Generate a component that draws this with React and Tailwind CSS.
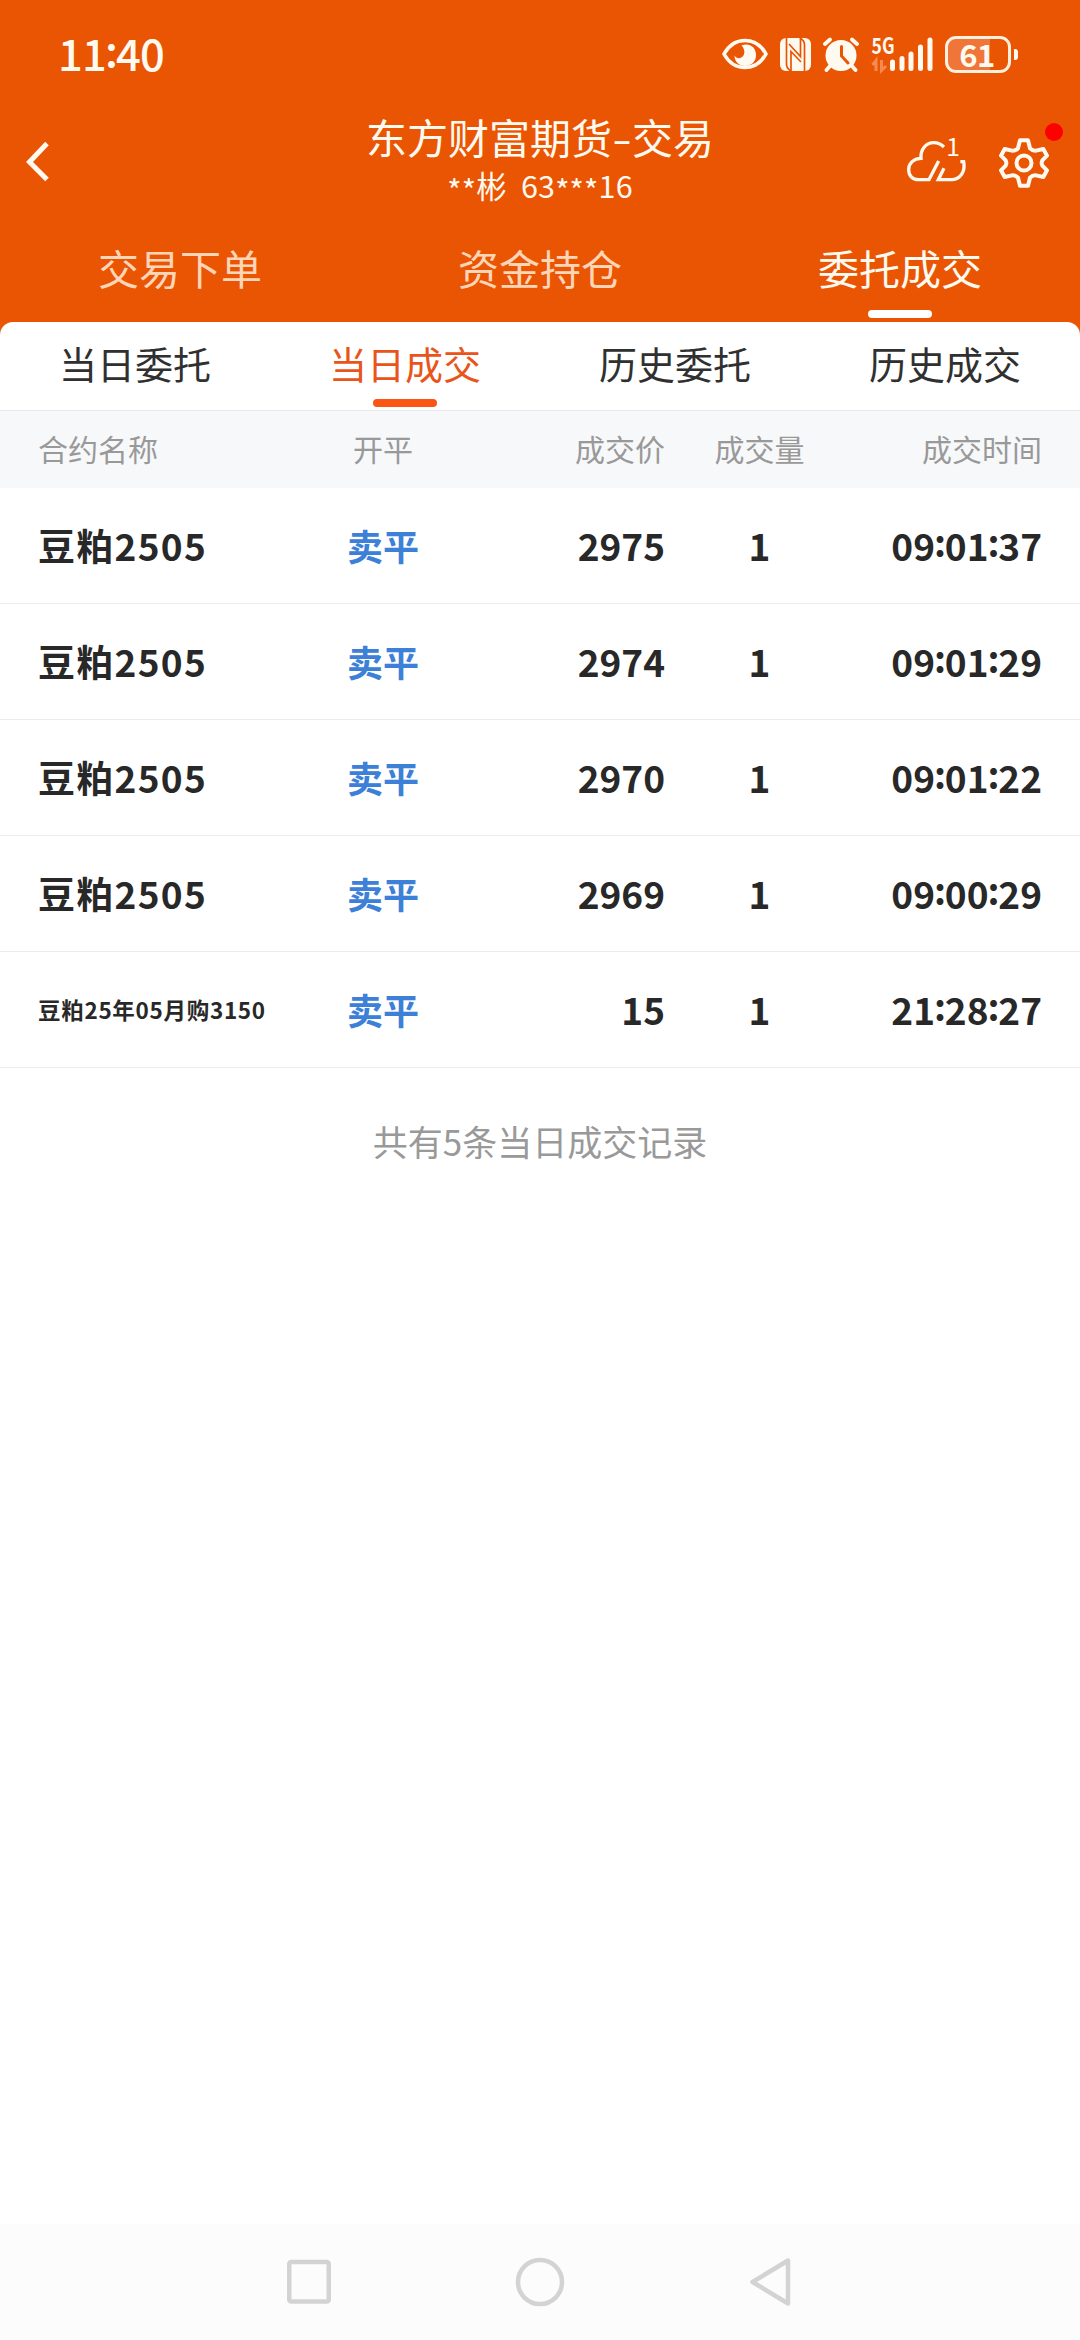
const MAIN_TABS = ['交易下单', '资金持仓', '委托成交'];
const SUB_TABS = ['当日委托', '当日成交', '历史委托', '历史成交'];

const TRADES = [
  { name: '豆粕2505', side: '卖平', price: '2975', qty: '1', time: '09:01:37' },
  { name: '豆粕2505', side: '卖平', price: '2974', qty: '1', time: '09:01:29' },
  { name: '豆粕2505', side: '卖平', price: '2970', qty: '1', time: '09:01:22' },
  { name: '豆粕2505', side: '卖平', price: '2969', qty: '1', time: '09:00:29' },
  { name: '豆粕25年05月购3150', side: '卖平', price: '15', qty: '1', time: '21:28:27', small: true },
];

const GRID = 'grid grid-cols-[260px_170px_197px_189px_188px] items-center px-[38px]';

// digits with a narrow colon that sits at mid height
function Clock({ value }) {
  return value.split(/(:)/).map((part, i) =>
    part === ':'
      ? <span key={i} className="relative -top-[0.09em] -mx-[0.03em]">:</span>
      : <span key={i}>{part}</span>
  );
}

function EyeIcon() {
  return (
    <svg width="46" height="32" viewBox="0 0 46 32" fill="none">
      <path d="M2 16C7 7 14 2.500 23 2.500s16 4.500 21 13.500c-5 9-12 13.500-21 13.500S7 25 2 16Z" stroke="#fffaf0" strokeWidth="3.600" strokeLinejoin="round" />
      <path d="M19.500 7.500C27 4.500 34 9 34 17c0 7-5 11-11 11s-10.500-4.500-10.500-10.500C14 20 16 20.500 18 20c5-1 6-8 1.500-12.500Z" fill="#fffaf0" />
    </svg>
  );
}

function NfcIcon() {
  return (
    <svg width="31" height="33" viewBox="0 0 31 33" fill="none">
      <rect width="31" height="33" rx="6" fill="#fffaf0" />
      <path d="M6.500 0v26q0 4.500 4.500 7M24.500 33V7q0-4.500-4.500-7" stroke="#ea5504" strokeWidth="1.700" />
      <path d="M11 33V13.500L21 24M20.500 0v18.500L9 6" stroke="#ea5504" strokeWidth="1.700" />
    </svg>
  );
}

function AlarmIcon() {
  return (
    <svg width="36" height="35" viewBox="0 0 36 35" fill="none">
      <circle cx="18" cy="18.500" r="15.500" fill="#fffaf0" />
      <path d="M2 7l5-4.500M34 7l-5-4.500M7 29l-3.500 4M29 29l3.500 4" stroke="#fffaf0" strokeWidth="3.800" strokeLinecap="round" />
      <path d="M18.500 9.500v9.500l6.500 7" stroke="#ea5504" strokeWidth="3" strokeLinecap="round" />
    </svg>
  );
}

function SignalIcon() {
  return (
    <svg className="-my-2" width="63" height="51" viewBox="0 -8 63 51" fill="none">
      <text x="0.500" y="17" textLength="23" lengthAdjust="spacingAndGlyphs" fontSize="22" fontWeight="700" fill="#fffaf0">5G</text>
      <path d="M5 34V23.500L1.500 28M10.500 23v10.500L15 29" stroke="#f68a50" strokeWidth="3" />
      <path d="M21.500 25v6.500M31 21.500v10M40 17v14.500M49.500 10v21.500M59 3v28.500" stroke="#fffaf0" strokeWidth="5" strokeLinecap="round" />
    </svg>
  );
}

function Battery() {
  return (
    <div className="flex items-center gap-[3px]">
      <div className="flex h-[37px] w-[66px] items-center justify-center rounded-[11px] border-3 border-[#ffefdf] bg-linear-to-r from-[#ef7638] from-70% to-transparent to-70% text-[31px] leading-none font-bold">
        <span className="relative -top-px -left-px tracking-[-0.5px]">61</span>
      </div>
      <div className="h-[11px] w-1 rounded-r-[3px] bg-[#fffaf0]" />
    </div>
  );
}

function StatusBar() {
  return (
    <div className="flex h-[108px] items-center pr-[62px] pl-[58px]">
      <span className="relative -top-px text-[43.5px] leading-none font-medium tracking-[-0.7px]"><Clock value="11:40" /></span>
      <div className="ml-auto flex items-center">
        <EyeIcon />
        <div className="w-3" />
        <NfcIcon />
        <div className="w-3" />
        <AlarmIcon />
        <div className="w-3" />
        <SignalIcon />
        <div className="w-[11px]" />
        <Battery />
      </div>
    </div>
  );
}

function CloudIcon() {
  return (
    <svg width="62" height="64" viewBox="0 -36 186 192" fill="none">
      <path d="M95 72L66 128H34C16 128 5 115 5 98c0-20 15-33 37-34-2-28 16-47 38-47 12 0 22 4 31 13" stroke="#fffaf0" strokeWidth="10" />
      <path d="M111 94L94 128h42c24-2 40-24 34-54h-10" stroke="#fffaf0" strokeWidth="10" />
      <text x="118" y="57" fontSize="74" fill="#fffaf0">1</text>
    </svg>
  );
}

function GearIcon() {
  return (
    <svg width="50" height="50" viewBox="0 0 150 150" fill="none" stroke="#fffaf0" strokeWidth="12" strokeLinejoin="round">
      <path d="M63 7H87L93 31Q101 39 111 38L133 33L144 53L130 67Q126 75 130 83L144 97L133 117L111 112Q101 111 93 119L87 143H63L57 119Q49 111 39 112L17 117L6 97L20 83Q24 75 20 67L6 53L17 33L39 38Q49 39 57 31Z" />
      <circle cx="75" cy="75" r="22.500" />
    </svg>
  );
}

function TitleBar() {
  return (
    <div className="grid h-[116px] grid-cols-[200px_1fr_200px]">
      <svg className="mt-[33px] ml-[26px]" width="24" height="42" viewBox="0 0 24 42" fill="none">
        <path d="M21 2.500L3.500 21L21 38.500" stroke="#fffaf0" strokeWidth="5" />
      </svg>
      <div className="flex flex-col items-center pt-[5px]">
        <h1 className="text-[41px] leading-[46px] whitespace-nowrap">
          东方财富期货
          <span className="inline-block w-5 scale-x-140 text-center">-</span>
          交易
        </h1>
        <p className="mt-[3px] text-[30.5px] leading-[46px] tracking-[0.2px] whitespace-pre">
          <span className="relative top-1">**</span>彬  63<span className="relative top-1">***</span>16
        </p>
      </div>
      <div className="flex">
        <div className="mt-[17px] ml-[27px]"><CloudIcon /></div>
        <div className="relative mt-[30px] ml-[30px] h-[50px]">
          <GearIcon />
          <span className="absolute -top-[15px] left-[46px] size-[18px] rounded-full bg-[#ff0000]" />
        </div>
      </div>
    </div>
  );
}

function MainTabs({ active }) {
  return (
    <div className="grid h-[98px] grid-cols-3">
      {MAIN_TABS.map(t => (
        <div key={t} className="flex flex-col items-center pt-[13px]">
          <span className={`text-[41px] leading-[60px] ${t === active ? 'text-[#fffaf0]' : 'text-[#ffd5b8]'}`}>{t}</span>
          {t === active && <div className="mt-[13px] h-2 w-16 rounded-full bg-white" />}
        </div>
      ))}
    </div>
  );
}

function SubTabs({ active }) {
  return (
    <div className="grid h-[89px] grid-cols-4 rounded-t-[13px] border-b border-[#e8e8e8] bg-white">
      {SUB_TABS.map(t => (
        <div key={t} className="flex flex-col items-center pt-[11px]">
          <span className={`text-[38px] leading-[60px] ${t === active ? 'text-[#e9541a]' : 'text-[#303030]'}`}>{t}</span>
          {t === active && <div className="mt-1.5 h-2 w-16 rounded-full bg-[#fa5512]" />}
        </div>
      ))}
    </div>
  );
}

function TradeRow({ trade }) {
  return (
    <div className={`${GRID} h-[116px] border-b border-[#ececec] text-[37px] font-bold text-[#282828]`}>
      <span className={trade.small ? 'text-[22.5px] tracking-[0.7px] whitespace-nowrap' : 'tracking-[1.3px] whitespace-nowrap'}>
        {trade.name}
      </span>
      <span className="pb-0.5 text-center text-[36px] text-[#3c80d8]">{trade.side}</span>
      <span className="text-right">{trade.price}</span>
      <span className="text-center">{trade.qty}</span>
      <span className="text-right whitespace-nowrap"><Clock value={trade.time} /></span>
    </div>
  );
}

function NavBar() {
  return (
    <div className="flex h-[116px] items-center justify-center bg-[#fcfcfc]">
      <svg width="506" height="50" viewBox="0 0 506 50" fill="none" stroke="#d3d3d3" strokeWidth="4.500" strokeLinejoin="round">
        <rect x="2.250" y="5" width="39.500" height="39.500" rx="2" />
        <circle cx="253" cy="25" r="22" />
        <path d="M501 3.500v43L465.500 25Z" />
      </svg>
    </div>
  );
}

export default function App() {
  return (
    <div className="flex h-[2340px] w-[1080px] flex-col bg-white font-['Noto_Sans_CJK_SC',sans-serif]">
      <header className="bg-[#ea5504] text-[#fffaf0]">
        <StatusBar />
        <TitleBar />
        <MainTabs active="委托成交" />
        <SubTabs active="当日成交" />
      </header>

      <main className="flex-1">
        <div className={`${GRID} h-[77px] bg-[#f7f8fa] pb-[3px] text-[30px] text-[#999999]`}>
          <span>合约名称</span>
          <span className="text-center">开平</span>
          <span className="text-right">成交价</span>
          <span className="text-center">成交量</span>
          <span className="text-right">成交时间</span>
        </div>
        {TRADES.map(t => <TradeRow key={t.time} trade={t} />)}
        <p className="mt-[47px] text-center text-[35px] leading-[52px] text-[#999999]">共有5条当日成交记录</p>
      </main>

      <NavBar />
    </div>
  );
}
